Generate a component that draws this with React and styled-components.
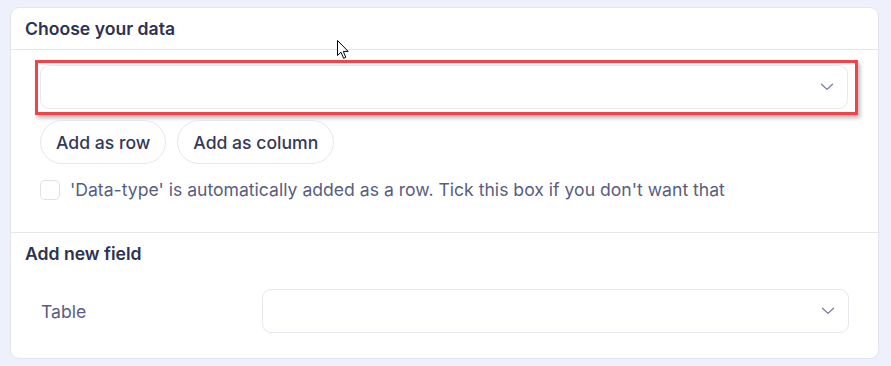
import React from "react";
import styled, { createGlobalStyle } from "styled-components";

const Global = createGlobalStyle`
  html, body { margin: 0; padding: 0; background: #eef0fb; }
  body { font-family: Inter, "Noto Sans", sans-serif; -webkit-font-smoothing: antialiased; }
  * { box-sizing: border-box; }
`;

const Page = styled.div`
  padding: 7px 12px 7px 10px;
  position: relative;
`;

const Card = styled.div`
  background: #ffffff;
  border: 1px solid #e3e5ee;
  border-radius: 9px;
  height: 352px;
  display: flex;
  flex-direction: column;
`;

const CardHeader = styled.div`
  height: 42px;
  display: flex;
  align-items: center;
  padding: 0 14px;
  border-bottom: 1px solid #e5e6ec;
`;

const Title = styled.h2`
  margin: 0;
  font-size: 17.6px;
  line-height: 22px;
  font-weight: 600;
  color: #2d3152;
`;

const Body = styled.div`
  padding: 10px 29px 31px 29px;
  border-bottom: 1px solid #e5e6ec;
  display: flex;
  flex-direction: column;
`;

const Annotation = styled.div`
  margin: 0 -9px 0 -5px;
  padding: 2px 7px 3px 2px;
  border: 3px solid #f2424a;
  box-shadow: 2px 3px 4px rgba(0, 0, 0, 0.28);
`;

const Select = styled.div`
  height: 44px;
  border: 1px solid #e7e8ee;
  border-radius: 9px;
  background: #fff;
  display: flex;
  align-items: center;
  justify-content: flex-end;
  padding-right: 13px;
`;

const Chevron = () => (
  <svg width="14" height="8" viewBox="0 0 14 8" fill="none">
    <path d="M1.5 1.2 L7 6.4 L12.5 1.2" stroke="#7a7e99" strokeWidth="1.3" strokeLinecap="round" strokeLinejoin="round" />
  </svg>
);

const ButtonRow = styled.div`
  display: flex;
  gap: 11px;
  margin-top: 5px;
`;

const PillButton = styled.button`
  height: 44px;
  padding: 0 15px;
  border-radius: 22px;
  border: 1px solid #e6e7ee;
  background: #fff;
  font-family: Inter, "Noto Sans", sans-serif;
  font-size: 17.6px;
  font-weight: 500;
  color: #343859;
  cursor: pointer;
`;

const CheckRow = styled.label`
  display: flex;
  align-items: center;
  gap: 10px;
  margin-top: 15px;
  font-size: 17.6px;
  line-height: 22px;
  color: #585d80;
`;

const Box = styled.span`
  width: 20px;
  height: 20px;
  border: 1px solid #dfe1e8;
  border-radius: 5px;
  background: #fff;
  flex: none;
`;

const Section = styled.div`
  padding: 10px 29px 25px 14px;
  display: flex;
  flex-direction: column;
`;

const FieldRow = styled.div`
  display: grid;
  grid-template-columns: 221px 1fr;
  align-items: center;
  margin-top: 24px;
  padding-left: 16px;
`;

const Label = styled.span`
  font-size: 17.6px;
  color: #585d80;
`;

const Cursor = styled.svg`
  position: absolute;
  left: 337px;
  top: 40px;
`;

export default function App() {
  return (
    <>
      <Global />
      <Page>
        <Card>
          <CardHeader>
            <Title>Choose your data</Title>
          </CardHeader>
          <Body>
            <Annotation>
              <Select>
                <Chevron />
              </Select>
            </Annotation>
            <ButtonRow>
              <PillButton>Add as row</PillButton>
              <PillButton>Add as column</PillButton>
            </ButtonRow>
            <CheckRow>
              <Box />
              'Data-type' is automatically added as a row. Tick this box if you don't want that
            </CheckRow>
          </Body>
          <Section>
            <Title>Add new field</Title>
            <FieldRow>
              <Label>Table</Label>
              <Select>
                <Chevron />
              </Select>
            </FieldRow>
          </Section>
        </Card>
        <Cursor width="13" height="20" viewBox="0 0 13 20">
          <path d="M0.5 0.5 L0.5 15.5 L4 12.2 L6.6 18.3 L8.8 17.3 L6.3 11.4 L11.2 11.4 Z" fill="#fff" stroke="#000" strokeWidth="1" strokeLinejoin="round" />
        </Cursor>
      </Page>
    </>
  );
}
